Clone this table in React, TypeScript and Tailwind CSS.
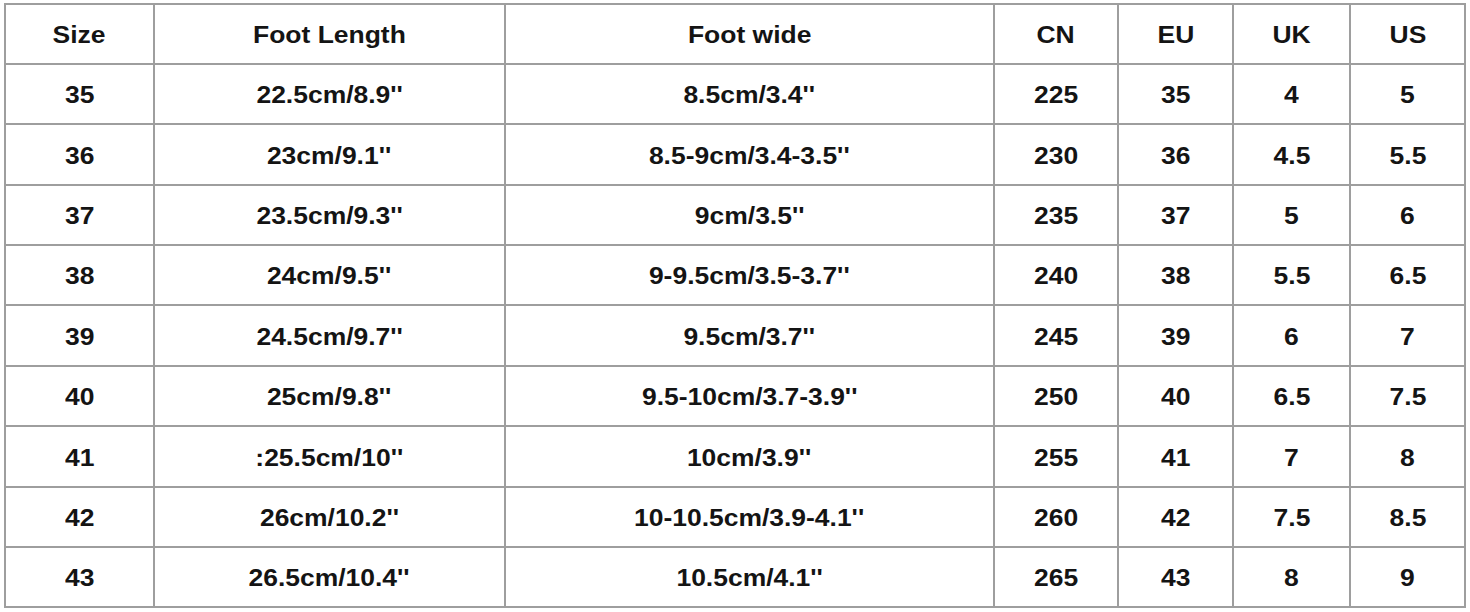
import React from "react";

const HEAD = ["Size", "Foot Length", "Foot wide", "CN", "EU", "UK", "US"];

const ROWS: string[][] = [
  ["35", "22.5cm/8.9''", "8.5cm/3.4''", "225", "35", "4", "5"],
  ["36", "23cm/9.1''", "8.5-9cm/3.4-3.5''", "230", "36", "4.5", "5.5"],
  ["37", "23.5cm/9.3''", "9cm/3.5''", "235", "37", "5", "6"],
  ["38", "24cm/9.5''", "9-9.5cm/3.5-3.7''", "240", "38", "5.5", "6.5"],
  ["39", "24.5cm/9.7''", "9.5cm/3.7''", "245", "39", "6", "7"],
  ["40", "25cm/9.8''", "9.5-10cm/3.7-3.9''", "250", "40", "6.5", "7.5"],
  ["41", ":25.5cm/10''", "10cm/3.9''", "255", "41", "7", "8"],
  ["42", "26cm/10.2''", "10-10.5cm/3.9-4.1''", "260", "42", "7.5", "8.5"],
  ["43", "26.5cm/10.4''", "10.5cm/4.1''", "265", "43", "8", "9"],
];

const Cell: React.FC<{ text: string }> = ({ text }) => (
  <div className="bg-white flex items-center justify-center pt-[3px]">
    <span className="inline-block scale-x-[1.15] text-[23px] font-bold text-[#141414] leading-none">{text}</span>
  </div>
);

export default function App() {
  const all = [HEAD, ...ROWS];
  return (
    <div className="w-[1470px] h-[612px] bg-white pt-[3px] pl-[4px]" style={{ fontFamily: '"Liberation Sans", Arial, sans-serif' }}>
      <div className="inline-block border-2 border-[#9e9e9e] bg-[#9e9e9e]">
        <div className="grid grid-cols-[147px_349px_487px_122px_113px_115px_113px] grid-rows-[58px_58px_59px_58px_58px_59px_58px_59px_58px_58px] gap-[2px]">
          {all.map((row, i) => row.map((t, j) => <Cell key={`${i}-${j}`} text={t} />))}
        </div>
      </div>
    </div>
  );
}
